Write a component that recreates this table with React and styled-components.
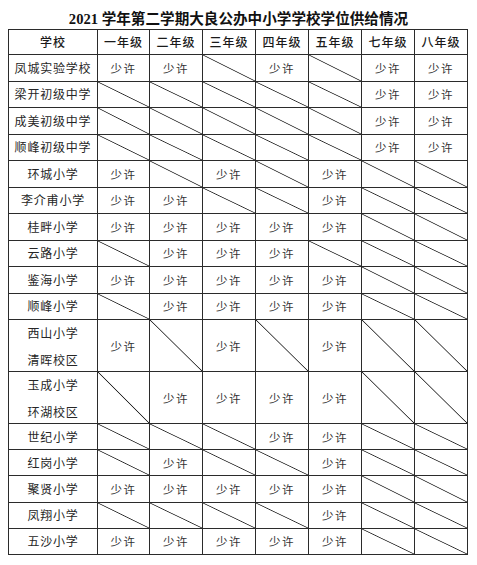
import React from 'react';
import styled, { createGlobalStyle } from 'styled-components';

const GlobalStyle = createGlobalStyle`
  html, body {
    margin: 0;
    padding: 0;
    background: #ffffff;
  }
  body {
    font-family: "Liberation Serif", "Noto Sans CJK SC", serif;
    color: #222;
  }
`;

const Page = styled.div`
  width: 477px;
  height: 565px;
  background: #fff;
`;

const Title = styled.h1`
  box-sizing: border-box;
  height: 29px;
  margin: 0;
  padding-top: 11px;
  font-size: 14.6px;
  line-height: 16px;
  font-weight: 700;
  text-align: center;
  color: #111;
  font-family: "Liberation Serif", "Noto Sans CJK SC", serif;
`;

const Grid = styled.div`
  margin-left: 8px;
  width: 460px;
  box-sizing: border-box;
  display: grid;
  grid-template-columns: 88px 51px repeat(6, 52px);
  grid-template-rows: 24px repeat(10, 25.5px) repeat(2, 51px) repeat(5, 25.2px);
  gap: 1px;
  background: #2b2b2b;
  border: 1px solid #2b2b2b;
`;

const Cell = styled.div`
  display: flex;
  flex-direction: column;
  align-items: center;
  justify-content: center;
  background: ${(p) =>
    p.$slash
      ? 'linear-gradient(to top right, #fff calc(50% - 0.8px), #2b2b2b 50%, #fff calc(50% + 0.8px))'
      : '#fff'};
  font-family: "Noto Sans CJK SC", sans-serif;
  font-size: 12px;
  letter-spacing: 0.8px;
  color: #262626;
  line-height: ${(p) => (p.$tall ? '27px' : '14px')};
  white-space: nowrap;
`;

const HeadCell = styled(Cell)`
  font-size: 12px;
  letter-spacing: 1px;
  color: #1a1a1a;
  font-weight: 500;
`;

const Note = styled.span`
  font-size: 11.5px;
  letter-spacing: 1.5px;
  color: #333;
`;

const grades = ['一年级', '二年级', '三年级', '四年级', '五年级', '七年级', '八年级'];

// S = 少许, X = 斜线 (no places)
const rows = [
  { name: ['凤城实验学校'], v: 'SSXSXSS' },
  { name: ['梁开初级中学'], v: 'XXXXXSS' },
  { name: ['成美初级中学'], v: 'XXXXXSS' },
  { name: ['顺峰初级中学'], v: 'XXXXXSS' },
  { name: ['环城小学'], v: 'SXSXSXX' },
  { name: ['李介甫小学'], v: 'SSXXSXX' },
  { name: ['桂畔小学'], v: 'SSSSSXX' },
  { name: ['云路小学'], v: 'XSSSXXX' },
  { name: ['鉴海小学'], v: 'SSSSSXX' },
  { name: ['顺峰小学'], v: 'XSSSSXX' },
  { name: ['西山小学', '清晖校区'], v: 'SXSXSXX' },
  { name: ['玉成小学', '环湖校区'], v: 'XSSSSXX' },
  { name: ['世纪小学'], v: 'XXXSSXX' },
  { name: ['红岗小学'], v: 'XSXXSXX' },
  { name: ['聚贤小学'], v: 'SSSSSXX' },
  { name: ['凤翔小学'], v: 'XXXXSXX' },
  { name: ['五沙小学'], v: 'SSSSSXX' },
];

export default function App() {
  return (
    <Page>
      <GlobalStyle />
      <Title>2021 学年第二学期大良公办中小学学校学位供给情况</Title>
      <Grid>
        <HeadCell>学校</HeadCell>
        {grades.map((g) => (
          <HeadCell key={g}>{g}</HeadCell>
        ))}
        {rows.map((row) => (
          <React.Fragment key={row.name.join('')}>
            <Cell $tall={row.name.length > 1}>
              {row.name.map((line) => (
                <span key={line}>{line}</span>
              ))}
            </Cell>
            {row.v.split('').map((c, i) =>
              c === 'S' ? (
                <Cell key={i}>
                  <Note>少许</Note>
                </Cell>
              ) : (
                <Cell key={i} $slash />
              )
            )}
          </React.Fragment>
        ))}
      </Grid>
    </Page>
  );
}
